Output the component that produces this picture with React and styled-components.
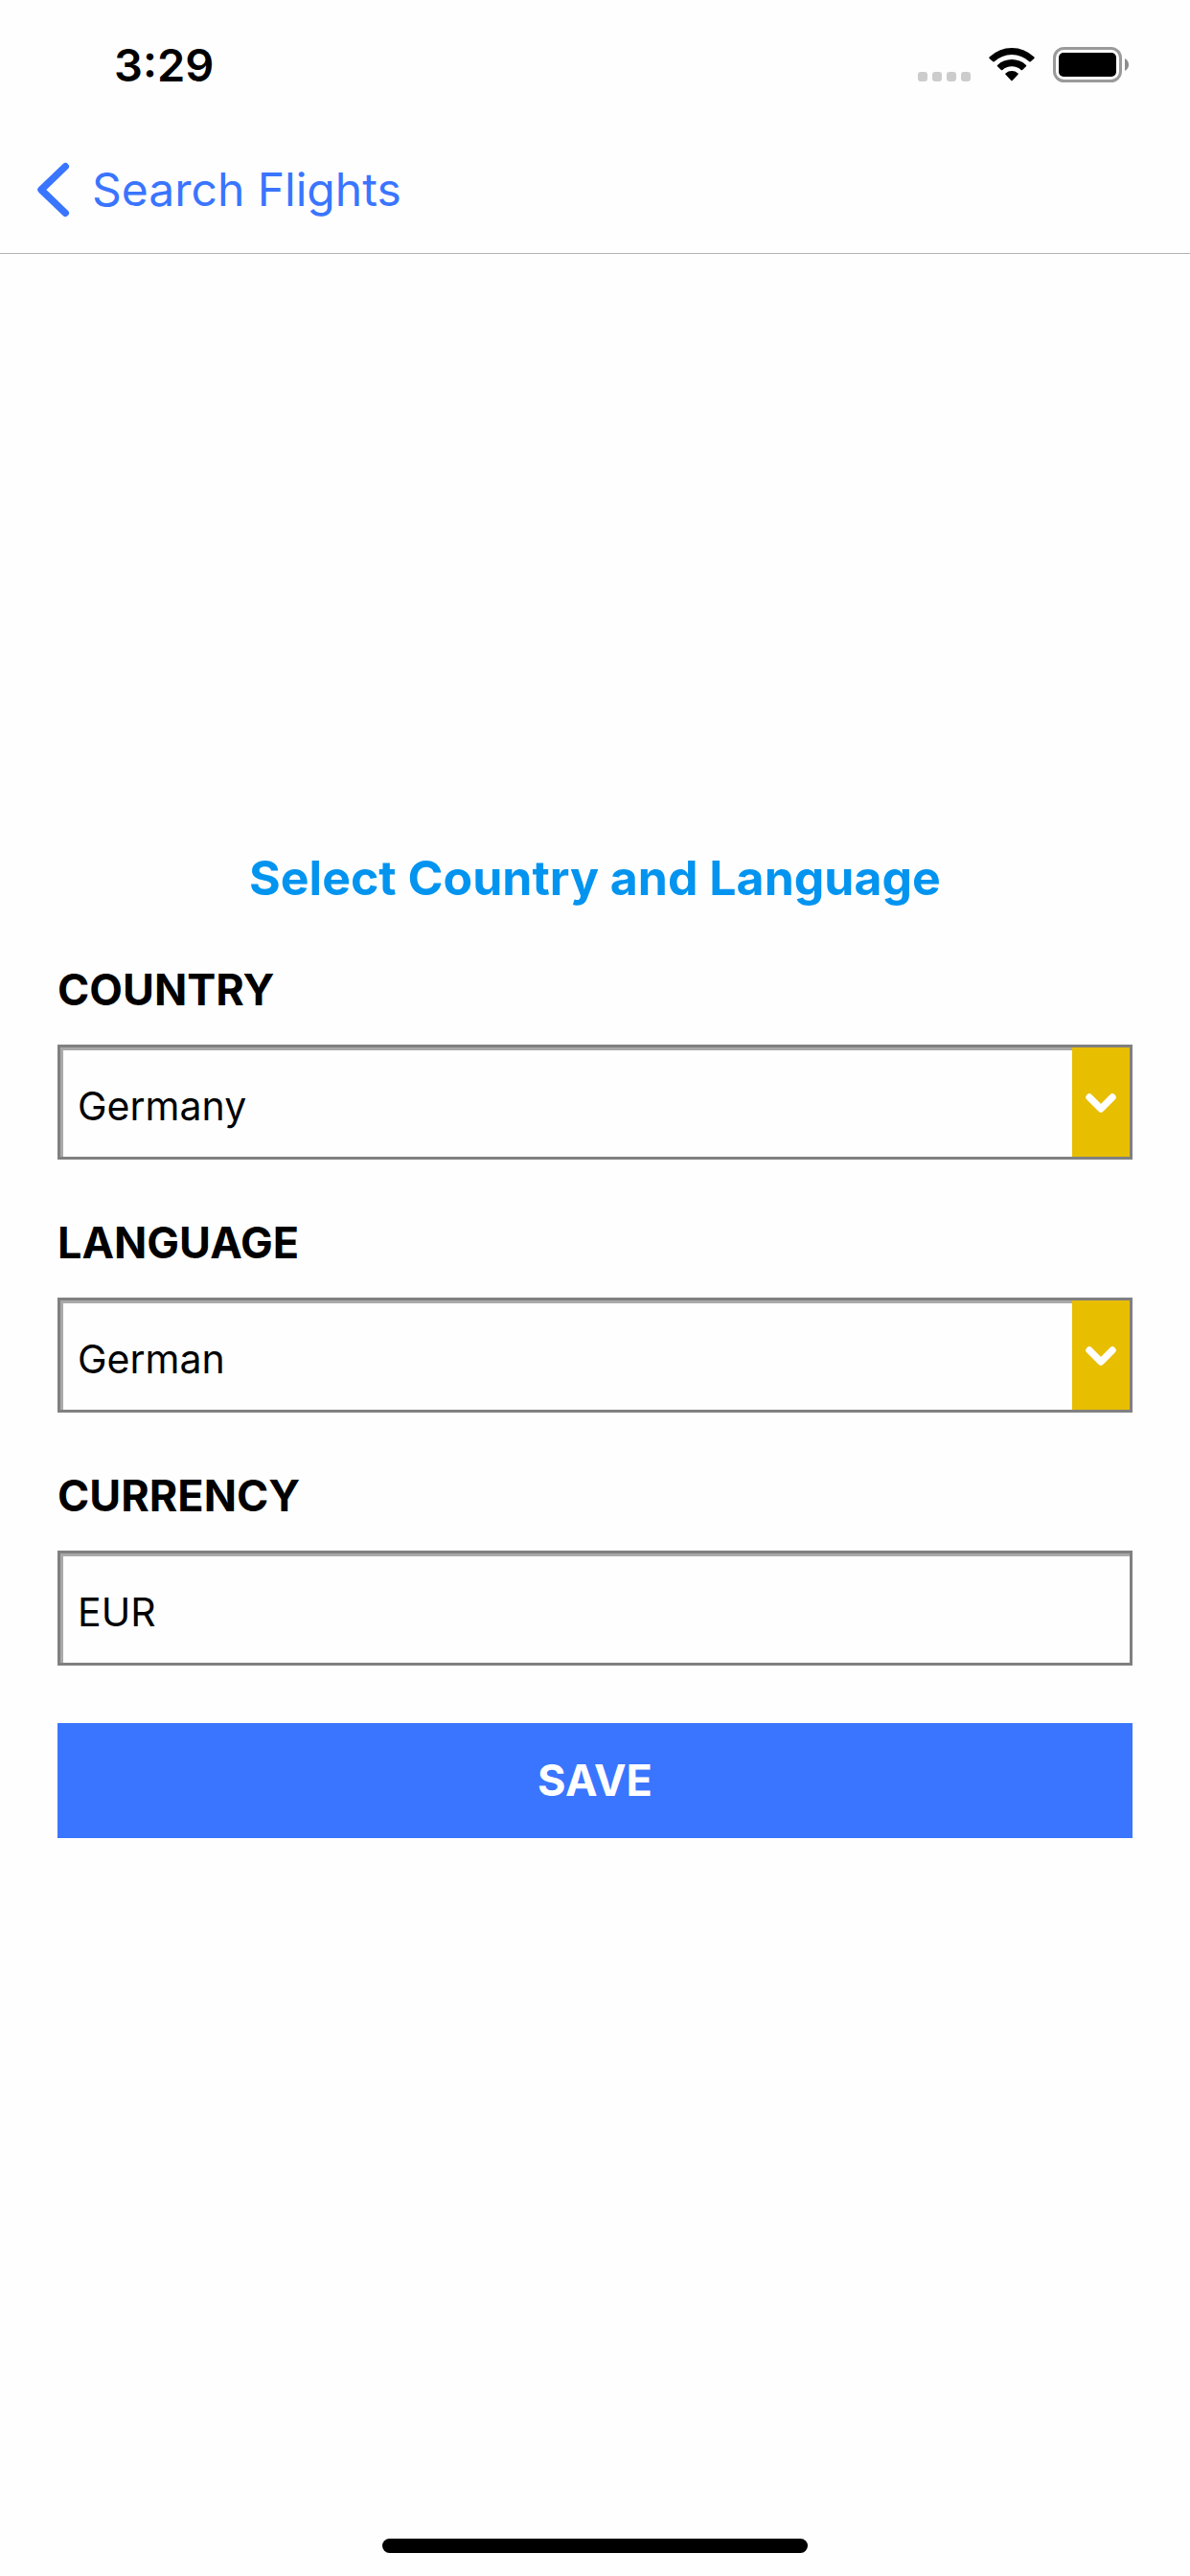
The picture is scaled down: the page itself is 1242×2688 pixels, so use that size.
import React, { useState } from "react";
import styled, { createGlobalStyle } from "styled-components";

const GlobalStyle = createGlobalStyle`
  *, *::before, *::after { box-sizing: border-box; }
  body {
    margin: 0;
    background: #fefefe;
    color: #000;
    font-family: Inter, "Liberation Sans", sans-serif;
  }
`;

const Screen = styled.div`
  display: flex;
  flex-direction: column;
  min-height: 100vh;
`;

const StatusBar = styled.div`
  display: flex;
  align-items: center;
  justify-content: space-between;
  height: 132px;
  padding: 3px 64px 0 119px;
`;

const Time = styled.time`
  font-size: 47px;
  line-height: 60px;
  font-weight: 600;
`;

const StatusIcons = styled.div`
  display: flex;
  align-items: flex-end;
  gap: 19px;

  svg { display: block; }
`;

const NavBar = styled.nav`
  display: flex;
  align-items: center;
  height: 133px;
  padding: 0 36px;
  border-bottom: 1px solid #b2b2b2;
`;

const BackLink = styled.a`
  display: flex;
  align-items: center;
  gap: 20px;
  color: #3a75ff;
  font-size: 48px;
  line-height: 60px;
  text-decoration: none;

  svg { display: block; }
`;

const Main = styled.main`
  flex: 1;
  display: flex;
  flex-direction: column;
  justify-content: center;
  padding: 0 60px 48px;
`;

const Form = styled.form`
  display: flex;
  flex-direction: column;
  gap: 60px;
`;

const Title = styled.h1`
  margin: 0;
  color: #0394f0;
  font-size: 50px;
  line-height: 60px;
  font-weight: 700;
  text-align: center;
`;

const Field = styled.div`
  display: flex;
  flex-direction: column;
  gap: 30px;
`;

const Label = styled.label`
  font-size: 45px;
  line-height: 54px;
  font-weight: 700;
`;

const ControlBox = styled.div`
  display: grid;
  height: 120px;
  border: 3px solid #808080;
`;

const controlStyle = `
  grid-area: 1 / 1;
  width: 100%;
  min-width: 0;
  margin: 0;
  border: 3px solid transparent;
  border-top-color: #a9a9a9;
  border-left-color: #a9a9a9;
  border-right-width: 0;
  border-bottom-width: 0;
  border-radius: 0;
  background: #fefefe;
  color: #000;
  font-family: inherit;
  font-size: 41px;
  line-height: 50px;
  appearance: none;
  outline: none;
`;

const Select = styled.select`
  ${controlStyle}
  padding: 6px 76px 0 15px;
`;

const TextInput = styled.input`
  ${controlStyle}
  padding: 6px 15px 0;
`;

const Arrow = styled.span`
  grid-area: 1 / 1;
  justify-self: end;
  display: flex;
  align-items: center;
  justify-content: center;
  width: 60px;
  padding-top: 2px;
  background: #e8be00;
  pointer-events: none;
`;

const SaveButton = styled.button`
  height: 120px;
  border: 0;
  background: #3a75ff;
  color: #fff;
  font-family: inherit;
  font-size: 45px;
  line-height: 54px;
  font-weight: 700;
  cursor: pointer;
`;

const Footer = styled.footer`
  display: flex;
  align-items: flex-end;
  justify-content: center;
  height: 102px;
  padding-bottom: 24px;
`;

const HomeIndicator = styled.div`
  width: 444px;
  height: 15px;
  border-radius: 8px;
  background: #000;
`;

function SignalDots() {
  return (
    <svg width="55" height="11" viewBox="0 0 55 11" fill="#ccc" aria-hidden="true">
      {[0, 15, 30, 45].map((x) => (
        <rect key={x} x={x} width="10" height="10" rx="3" />
      ))}
    </svg>
  );
}

function WifiIcon() {
  return (
    <svg width="48" height="37" viewBox="0 0 48 37" aria-hidden="true">
      <path d="M0.6 10.6 A33.6 33.6 0 0 1 47.4 10.6 Q48 11.3 47.4 12 L43.7 15.3 Q43 15.8 42.3 15.2 A27 27 0 0 0 5.7 15.2 Q5 15.8 4.3 15.3 L0.6 12 Q0 11.3 0.6 10.6Z" />
      <path d="M9 18.9 A22 22 0 0 1 39 18.9 Q39.6 19.6 39 20.3 L35.1 24 Q34.4 24.6 33.7 24 A14.4 14.4 0 0 0 14.3 24 Q13.6 24.6 12.9 24 L9 20.3 Q8.4 19.6 9 18.9Z" />
      <path d="M17.5 27.4 A10.4 10.4 0 0 1 30.5 27.4 Q31.2 28.1 30.5 28.8 L24.7 34.9 Q24 35.6 23.3 34.9 L17.5 28.8 Q16.8 28.1 17.5 27.4Z" />
    </svg>
  );
}

function BatteryIcon() {
  return (
    <svg width="79" height="37" viewBox="0 0 79 37" aria-hidden="true">
      <rect x="1.5" y="1.5" width="69" height="34" rx="10" fill="none" stroke="#9a9a9a" strokeWidth="3" />
      <rect x="6" y="6" width="60" height="25" rx="5" />
      <path d="M75 12 Q79 14.5 79 18.5 Q79 22.5 75 25Z" fill="#8c8c8c" />
    </svg>
  );
}

function BackIcon() {
  return (
    <svg width="40" height="58" viewBox="0 0 40 58" fill="none" stroke="currentColor" aria-hidden="true">
      <path d="M32.3 4.7 L7 29 L32.3 53.3" strokeWidth="7.4" strokeLinecap="round" strokeLinejoin="round" />
    </svg>
  );
}

function ChevronIcon() {
  return (
    <svg width="34" height="22" viewBox="0 0 34 22" fill="none" stroke="#fff" aria-hidden="true">
      <path d="M5 5 L17 17 L29 5" strokeWidth="7.4" strokeLinecap="round" strokeLinejoin="round" />
    </svg>
  );
}

function SelectField({ id, label, value, options, onChange }) {
  return (
    <Field>
      <Label htmlFor={id}>{label}</Label>
      <ControlBox>
        <Select id={id} value={value} onChange={(e) => onChange(e.target.value)}>
          {options.map((o) => (
            <option key={o}>{o}</option>
          ))}
        </Select>
        <Arrow><ChevronIcon /></Arrow>
      </ControlBox>
    </Field>
  );
}

export default function App() {
  const [country, setCountry] = useState("Germany");
  const [language, setLanguage] = useState("German");
  const [currency, setCurrency] = useState("EUR");

  return (
    <Screen>
      <GlobalStyle />
      <StatusBar>
        <Time>3:29</Time>
        <StatusIcons>
          <SignalDots />
          <WifiIcon />
          <BatteryIcon />
        </StatusIcons>
      </StatusBar>
      <NavBar>
        <BackLink href="#search">
          <BackIcon />
          Search Flights
        </BackLink>
      </NavBar>
      <Main>
        <Form onSubmit={(e) => e.preventDefault()}>
          <Title>Select Country and Language</Title>
          <SelectField id="country" label="COUNTRY" value={country} options={["Germany"]} onChange={setCountry} />
          <SelectField id="language" label="LANGUAGE" value={language} options={["German"]} onChange={setLanguage} />
          <Field>
            <Label htmlFor="currency">CURRENCY</Label>
            <ControlBox>
              <TextInput id="currency" value={currency} onChange={(e) => setCurrency(e.target.value)} />
            </ControlBox>
          </Field>
          <SaveButton type="submit">SAVE</SaveButton>
        </Form>
      </Main>
      <Footer>
        <HomeIndicator />
      </Footer>
    </Screen>
  );
}
